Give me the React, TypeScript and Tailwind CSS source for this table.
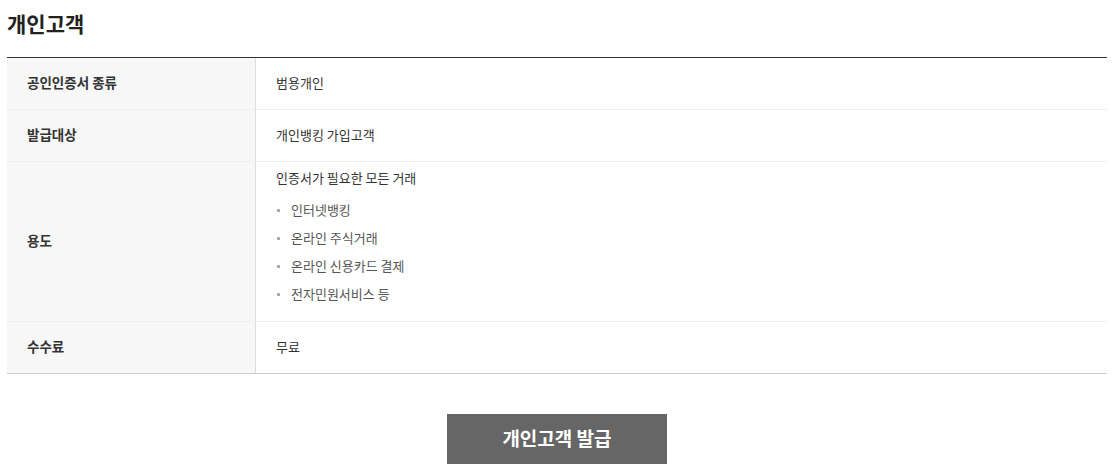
import React from "react";

const font = { fontFamily: '"Noto Sans CJK KR", "Noto Sans", sans-serif' };

function Row({ label, children, last, tall }: { label: string; children: React.ReactNode; last?: boolean; tall?: boolean }) {
  return (
    <div className={`flex ${last ? "border-b border-[#cccccc]" : "border-b border-[#eeeeee]"}`}>
      <div className={`w-[249px] shrink-0 bg-[#f7f7f7] border-r border-[#dddddd] pl-[20px] pb-[2px] flex items-center text-[13.5px] font-bold text-[#333333] ${tall ? "h-[159px]" : "h-[51px]"}`}>
        {label}
      </div>
      <div className={`flex-1 pl-[20px] text-[13px] text-[#333333] ${tall ? "h-[159px]" : "h-[51px] pb-[2px] flex items-center"}`}>
        {children}
      </div>
    </div>
  );
}

export default function App() {
  const items = ["인터넷뱅킹", "온라인 주식거래", "온라인 신용카드 결제", "전자민원서비스 등"];
  return (
    <div className="bg-white w-[1120px] h-[474px]" style={font}>
      <div className="ml-[7px] w-[1100px]">
        <h2 className="pt-[8px] text-[21px] leading-[30px] font-bold text-[#222222]">개인고객</h2>
        <div className="mt-[19px] border-t border-[#333333]">
          <Row label="공인인증서 종류">범용개인</Row>
          <Row label="발급대상">개인뱅킹 가입고객</Row>
          <Row label="용도" tall>
            <div className="pt-[6px]">
              <p className="leading-[20px] h-[20px]">인증서가 필요한 모든 거래</p>
              <ul className="mt-[8px]">
                {items.map((t) => (
                  <li key={t} className="flex items-center h-[28px] text-[#555555]">
                    <span className="w-[3px] h-[3px] bg-[#aaaaaa] ml-[1px] mr-[11px]" />
                    {t}
                  </li>
                ))}
              </ul>
            </div>
          </Row>
          <Row label="수수료" last>무료</Row>
        </div>
        <div className="mt-[40px] flex justify-center">
          <button className="w-[220px] h-[50px] pb-[2px] bg-[#666666] text-white text-[19px] font-bold">개인고객 발급</button>
        </div>
      </div>
    </div>
  );
}
